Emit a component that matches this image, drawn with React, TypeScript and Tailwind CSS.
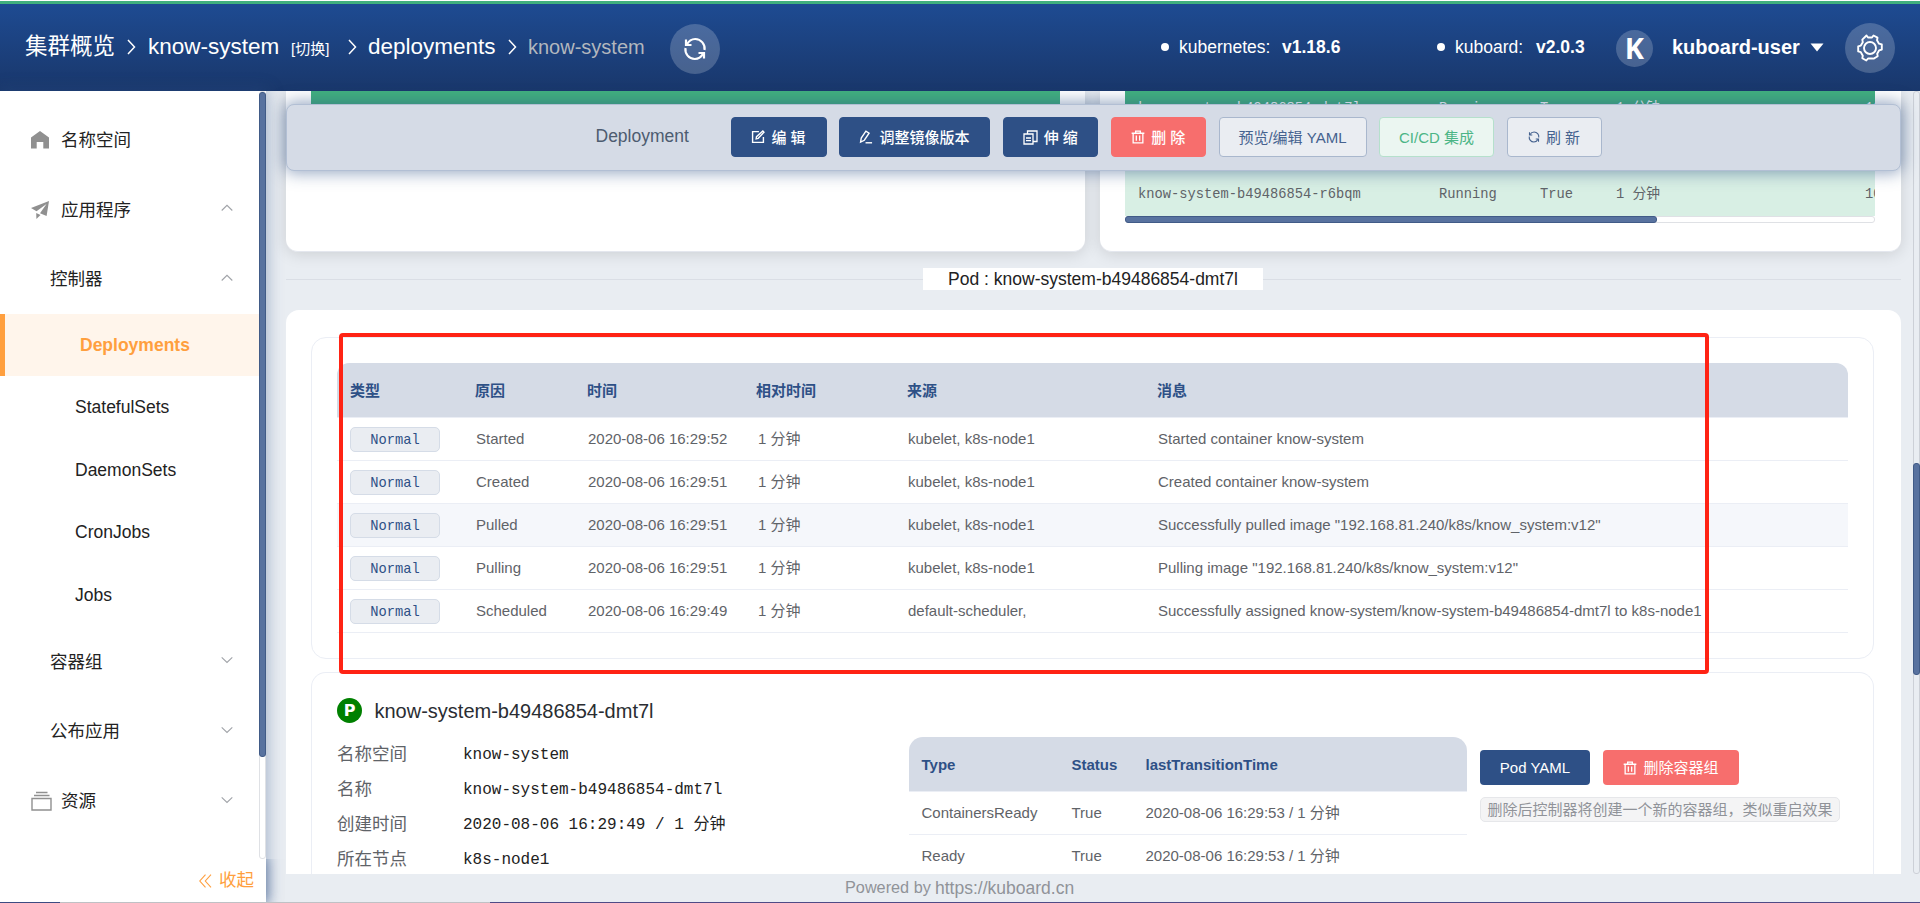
import React, { ReactNode } from "react";
import clsx from "clsx";

interface IconProps {
  className?: string;
}

interface IEvent {
  reason: string;
  time: string;
  source: string;
  message: string;
}

const events: IEvent[] = [
  {
    reason: "Started",
    time: "2020-08-06 16:29:52",
    source: "kubelet, k8s-node1",
    message: "Started container know-system",
  },
  {
    reason: "Created",
    time: "2020-08-06 16:29:51",
    source: "kubelet, k8s-node1",
    message: "Created container know-system",
  },
  {
    reason: "Pulled",
    time: "2020-08-06 16:29:51",
    source: "kubelet, k8s-node1",
    message: 'Successfully pulled image "192.168.81.240/k8s/know_system:v12"',
  },
  {
    reason: "Pulling",
    time: "2020-08-06 16:29:51",
    source: "kubelet, k8s-node1",
    message: 'Pulling image "192.168.81.240/k8s/know_system:v12"',
  },
  {
    reason: "Scheduled",
    time: "2020-08-06 16:29:49",
    source: "default-scheduler,",
    message:
      "Successfully assigned know-system/know-system-b49486854-dmt7l to k8s-node1",
  },
];

const details = [
  ["名称空间", "know-system"],
  ["名称", "know-system-b49486854-dmt7l"],
  ["创建时间", "2020-08-06 16:29:49 / 1 分钟"],
  ["所在节点", "k8s-node1"],
];

const conditions = ["ContainersReady", "Ready"];

const MONO = "font-['Liberation_Mono','Noto_Sans_CJK_SC',monospace]";

/* ---------- icons ---------- */

const HomeIcon = () => (
  <svg width="18" height="18" viewBox="0 0 18 18" fill="#909090">
    <path d="M0 6.500 9 0l9 6.500V17.500h-5.700V11H5.700v6.500H0Z" />
  </svg>
);

const PlaneIcon = () => (
  <svg width="18" height="18" viewBox="0 0 18 18" fill="#909090">
    <path d="M0 7 18 0 15.600 15 9 12.200 15.500 3 5.500 10.300Z" />
    <path d="M5.200 12 9.500 14 5.400 18Z" />
  </svg>
);

const BoxIcon = () => (
  <svg width="21" height="20" viewBox="0 0 21 20" fill="none" stroke="#909090">
    <path d="M5 1.500h11.500M3 4.500h15.500" strokeWidth="1.300" />
    <path d="M1 7.500h19v11.500H1Z" strokeWidth="1.400" />
  </svg>
);

const Chevron = ({ up }: { up?: boolean }) => (
  <svg
    width="12"
    height="8"
    viewBox="0 0 12 8"
    fill="none"
    stroke="#a0a3a8"
    strokeWidth="1.100"
  >
    <path d={up ? "M.7 6.500 6 1.300l5.300 5.200" : "M.7 1.300 6 6.500l5.300-5.200"} />
  </svg>
);

const Separator = ({ className }: IconProps) => (
  <svg
    width="9"
    height="16"
    viewBox="0 0 9 16"
    fill="none"
    stroke="#fff"
    strokeWidth="1.500"
    className={className}
  >
    <path d="M1 1l6.500 7L1 15" />
  </svg>
);

const RefreshIcon = ({ className }: IconProps) => (
  <svg
    viewBox="0 0 24 24"
    fill="none"
    stroke="currentColor"
    strokeWidth="2.200"
    className={className}
  >
    <path d="M3 2.500V8h5.500" />
    <path d="M3.800 7.500C6 3.500 9 2 12.200 2a9.500 9.500 0 0 1 9.300 11" />
    <path d="M21 21.500V16h-5.500" />
    <path d="M20.200 16.500C18 20.500 15 22 11.800 22a9.500 9.500 0 0 1-9.300-11" />
  </svg>
);

const GearIcon = () => (
  <svg
    width="28"
    height="28"
    viewBox="0 0 28 28"
    fill="none"
    stroke="#fff"
    strokeWidth="1.900"
    strokeLinejoin="round"
  >
    <path d="M10.500 1.500 12 3.500h4l1.500-2 4 2.200-.5 2.600 2 3.400 2.800.8v5l-2.600.8-2 3.500.5 2.500-4 2.300L16 24.500h-4l-1.700 2-4-2.300.5-2.500-2-3.500-2.600-.8v-5l2.600-.8 2-3.400-.5-2.600Z" />
    <circle cx="14" cy="14" r="6" />
  </svg>
);

const EditIcon = () => (
  <svg width="14" height="14" viewBox="0 0 15 15" fill="none" stroke="currentColor" strokeWidth="1.500">
    <path d="M8.500 1.700H1.700v11.600h11.600V7.500" />
    <path d="M5.500 9.500l.4-2.400 6.800-6 1.200 1.300-6.200 6.500Z" />
  </svg>
);

const PenIcon = () => (
  <svg width="14" height="14" viewBox="0 0 15 15" fill="none" stroke="currentColor" strokeWidth="1.500">
    <path d="M1.700 13l.7-4.300 5-7.500L10.800 3.500 5.700 11Z" />
    <path d="M7 13.700h7" />
  </svg>
);

const CopyIcon = () => (
  <svg width="15" height="15" viewBox="0 0 15 15" fill="none" stroke="currentColor" strokeWidth="1.300">
    <path d="M1 4h9v10H1Z" />
    <path d="M4.500 4V1H14v10.500h-4M3 8h5M3 10.700h5" />
  </svg>
);

const TrashIcon = () => (
  <svg width="14" height="14" viewBox="0 0 15 15" fill="none" stroke="currentColor" strokeWidth="1.400">
    <path d="M.7 3.500h13.600M5 3.300V1.200h5v2.100M2.300 3.500v10.300h10.400V3.500M5.700 6v5.500M9.300 6v5.500" />
  </svg>
);

/* ---------- header ---------- */

const Header = () => (
  <header className="h-[91px] flex-none bg-white pt-px">
    <div className="h-[90px] border-t-[3px] border-[#41b07e] bg-gradient-to-b from-[#1e4b92] to-[#19376b] flex items-center text-white whitespace-nowrap pb-px">
      <span className="ml-[25px] w-[91px] text-[22.5px]">集群概览</span>
      <Separator className="ml-[11px]" />
      <span className="ml-[12px] w-[131px] text-[22.5px]">know-system</span>
      <span className="ml-[12px] mt-1 w-[42px] text-[15px]">[切换]</span>
      <Separator className="ml-[15px]" />
      <span className="ml-[11px] w-[128px] text-[22.5px]">deployments</span>
      <Separator className="ml-[12px]" />
      <span className="ml-[11px] w-[117px] text-[20px] text-[#b2b7be]">
        know-system
      </span>
      <span className="ml-[25px] mt-[3px] size-[50px] rounded-full bg-white/20 flex items-center justify-center">
        <RefreshIcon className="size-[24px]" />
      </span>

      <span className="ml-auto size-2 rounded-full bg-white" />
      <span className="ml-[10px] w-[103px] text-[17.5px]">kubernetes:</span>
      <span className="w-[155px] text-[17.5px] font-bold">v1.18.6</span>
      <span className="size-2 rounded-full bg-white" />
      <span className="ml-[10px] w-[81px] text-[17.5px]">kuboard:</span>
      <span className="w-[80px] text-[17.5px] font-bold">v2.0.3</span>
      <span className="mt-[3px] size-[37px] rounded-full bg-white/20 flex items-center justify-center pb-[2px] font-['Noto_Sans',sans-serif] text-[29px] leading-none font-bold">
        K
      </span>
      <span className="ml-[19px] w-[129px] text-[20px] font-bold">
        kuboard-user
      </span>
      <svg width="14" height="9" viewBox="0 0 14 9" fill="#fff" className="ml-[9px]">
        <path d="M.5.5h13L7 8.500Z" />
      </svg>
      <span className="ml-[21px] mr-[25px] mt-[2px] size-[50px] rounded-full bg-white/20 flex items-center justify-center">
        <GearIcon />
      </span>
    </div>
  </header>
);

/* ---------- sidebar ---------- */

interface MenuItemProps {
  label: string;
  icon?: ReactNode;
  open?: boolean;
  collapsible?: boolean;
  className?: string;
}

const MenuItem = ({ label, icon, open, collapsible, className }: MenuItemProps) => (
  <div className={clsx("h-[69.7px] flex items-center pr-[26px]", className)}>
    {icon && <span className="w-[30px] flex-none">{icon}</span>}
    <span className="pt-px">{label}</span>
    {collapsible && (
      <span className="ml-auto pb-[3px]">
        <Chevron up={open} />
      </span>
    )}
  </div>
);

const Sidebar = () => (
  <aside className="relative z-20 w-[266px] flex-none flex flex-col bg-white text-[17.5px] text-[#222] shadow-[0_0_14px_2px_rgba(46,80,134,0.35)]">
    <div className="flex h-[768px]">
      <nav className="flex-1 pt-[14px]">
        <MenuItem label="名称空间" icon={<HomeIcon />} className="pl-[31px]" />
        <MenuItem label="应用程序" icon={<PlaneIcon />} collapsible open className="pl-[31px]" />
        <MenuItem label="控制器" collapsible open className="pl-[50px]" />
        <div className="h-[62px] border-l-[5px] border-[#ff9f3e] bg-[#fff5eb] pl-[75px] flex items-center font-bold text-[#ff9f3e]">
          Deployments
        </div>
        {["StatefulSets", "DaemonSets", "CronJobs", "Jobs"].map((name) => (
          <div key={name} className="h-[62.7px] pl-[75px] flex items-center">
            {name}
          </div>
        ))}
        <MenuItem label="容器组" collapsible className="pl-[50px]" />
        <MenuItem label="公布应用" collapsible className="pl-[50px]" />
        <MenuItem label="资源" icon={<BoxIcon />} collapsible className="pl-[31px]" />
      </nav>
      <div className="w-[7px] flex-none rounded-[3px] border border-[#dfe1e5]">
        <div className="-mx-px h-[665px] rounded-[3px] border border-[#415b87] bg-[#58729f]" />
      </div>
    </div>
    <div className="flex-1 flex items-center justify-end gap-[7px] pr-[12px] text-[#ff9f3e] shadow-[0_0_12px_1px_rgba(46,80,134,0.6)] [clip-path:inset(0_-20px_0_0)]">
      <svg width="13" height="14" viewBox="0 0 13 14" fill="none" stroke="currentColor" strokeWidth="1.100">
        <path d="M6.500.7.8 7l5.700 6.300M12 .7 6.300 7l5.700 6.300" />
      </svg>
      收起
    </div>
  </aside>
);

/* ---------- floating toolbar ---------- */

interface ToolButtonProps {
  children: ReactNode;
  icon?: ReactNode;
  className: string;
}

const ToolButton = ({ children, icon, className }: ToolButtonProps) => (
  <button
    className={clsx(
      "h-[40px] flex items-center justify-center gap-[6px] rounded-[4px] border text-[15px] whitespace-nowrap",
      className
    )}
  >
    {icon}
    {children}
  </button>
);

const PRIMARY = "bg-[#2e5086] border-[#2e5086] text-white font-medium";
const PLAIN = "bg-[#eaedf2] border-[#a9b7cd] text-[#45628f]";
const DANGER = "bg-[#f76e6d] border-[#f76e6d] text-white font-medium";

const Toolbar = () => (
  <div className="absolute left-[19.500px] top-[12.500px] z-10 w-[1615px] h-[67.500px] flex items-center rounded-[8px] border border-[#b2bfd4] bg-[#d5dbe6] shadow-[0_0_16px_2px_rgba(46,80,134,0.5)]">
    <span className="ml-[309px] w-[135px] pb-[2px] text-[17.5px] text-[#4d5c70]">
      Deployment
    </span>
    <div className="flex gap-[12.500px]">
      <ToolButton icon={<EditIcon />} className={clsx(PRIMARY, "w-[96px]")}>
        编 辑
      </ToolButton>
      <ToolButton icon={<PenIcon />} className={clsx(PRIMARY, "w-[151px]")}>
        调整镜像版本
      </ToolButton>
      <ToolButton icon={<CopyIcon />} className={clsx(PRIMARY, "w-[95.500px]")}>
        伸 缩
      </ToolButton>
      <ToolButton icon={<TrashIcon />} className={clsx(DANGER, "w-[95.500px]")}>
        删 除
      </ToolButton>
      <ToolButton className={clsx(PLAIN, "w-[148px]")}>预览/编辑 YAML</ToolButton>
      <ToolButton className="w-[115px] bg-[#ebf6f1] border-[#b5e0cc] text-[#4bb586]">
        CI/CD 集成
      </ToolButton>
      <ToolButton
        icon={<RefreshIcon className="size-[12px]" />}
        className={clsx(PLAIN, "w-[95px]")}
      >
        刷 新
      </ToolButton>
    </div>
  </div>
);

/* ---------- content ---------- */

const ReplicaRow = ({ name, className }: { name: string; className: string }) => (
  <div className={clsx("flex items-center flex-none whitespace-pre pl-[13px]", className)}>
    <span className="w-[301px] flex-none">{name}</span>
    <span className="w-[101px] flex-none">Running</span>
    <span className="w-[76px] flex-none">True</span>
    <span className="w-[249px] flex-none">1 分钟</span>
    <span>10</span>
  </div>
);

const OverviewCards = () => (
  <div className="flex gap-[14.500px] h-[161px]">
    <div className="w-[799px] rounded-b-[12px] border-b border-[#e4e7ee] bg-white px-[25px] shadow-[0_2px_16px_rgba(0,0,0,0.13)]">
      <div className="h-[26px] bg-[#41b07e]" />
    </div>
    <div className="w-[801px] rounded-b-[12px] border-b border-[#e4e7ee] bg-white pl-[25.500px] pr-[26px] shadow-[0_2px_16px_rgba(0,0,0,0.13)]">
      <div className={clsx("flex flex-col overflow-hidden text-[13.750px] text-[#5f6368]", MONO)}>
        <ReplicaRow
          name="know-system-b49486854-dmt7l"
          className="h-[35px] bg-[#41b07e] text-white"
        />
        <div className="h-[44px] bg-[#d8efe4]" />
        <ReplicaRow
          name="know-system-b49486854-r6bqm"
          className="h-[46px] pt-[4px] bg-[#d8efe4]"
        />
      </div>
      <div className="h-[7px] rounded-[3px] border border-[#dfe1e5]">
        <div className="-mx-px -mt-px h-[7px] w-[532px] rounded-[3px] border border-[#415b87] bg-[#58729f]" />
      </div>
    </div>
  </div>
);

const EVENT_GRID = "grid grid-cols-[125px_112px_169px_151px_250px_1fr] items-center pl-[13px]";

const EventTable = () => (
  <div className="h-[322px] rounded-[15px] border border-[#ebeef5] px-[25px] pt-[25px] text-[15px] text-[#5f6368]">
    <div
      className={clsx(
        EVENT_GRID,
        "h-[55px] pt-px rounded-t-[12px] border-b border-[#ebeef5] bg-[#d5dbe6] font-bold text-[#2e5086]"
      )}
    >
      <span>类型</span>
      <span>原因</span>
      <span>时间</span>
      <span>相对时间</span>
      <span>来源</span>
      <span>消息</span>
    </div>
    {events.map((event) => (
      <div
        key={event.reason}
        className={clsx(
          EVENT_GRID,
          "h-[43px] border-b border-[#ebeef5] whitespace-nowrap",
          event.reason === "Pulled" && "bg-[#f5f7fb]"
        )}
      >
        <span
          className={clsx(
            "w-[90px] h-[25px] pt-[3px] flex items-center justify-center rounded-[5px] border border-[#d5dce7] bg-[#eaedf2] text-[13.750px] text-[#2e5086]",
            MONO
          )}
        >
          Normal
        </span>
        <span className="pl-px">{event.reason}</span>
        <span className="pl-px">{event.time}</span>
        <span className="pl-[2px]">1 分钟</span>
        <span className="pl-px">{event.source}</span>
        <span className="pl-px">{event.message}</span>
      </div>
    ))}
  </div>
);

const CONDITION_GRID = "grid grid-cols-[150px_74px_1fr] items-center pl-[12.500px]";

const PodDetail = () => (
  <div className="h-[260px] mt-[13px] rounded-t-[15px] border border-b-0 border-[#ebeef5] px-[25px] pt-[25px] flex">
    <div className="w-[572px] flex-none text-[17.5px]">
      <div className="flex h-[25px] items-center gap-[12.500px]">
        <span className="size-[25px] rounded-full bg-[#008000] flex items-center justify-center pt-px font-['DejaVu_Sans',sans-serif] text-[16px] leading-none font-bold text-white">
          P
        </span>
        <span className="text-[20px] text-[#2a2d32]">
          know-system-b49486854-dmt7l
        </span>
      </div>
      <div className="pt-[14px]">
        {details.map(([label, value]) => (
          <div key={label} className="flex h-[35px] items-center">
            <span className="w-[126px] text-[#5f6368]">{label}</span>
            <span className={clsx("pt-[2px] text-[16px] text-[#222]", MONO)}>{value}</span>
          </div>
        ))}
      </div>
    </div>

    <div className="w-[558px] flex-none pt-[39px] text-[15px] text-[#5f6368]">
      <div
        className={clsx(
          CONDITION_GRID,
          "h-[55px] pt-[2px] rounded-t-[14px] border-b border-[#ebeef5] bg-[#d5dbe6] font-bold text-[#2e5086]"
        )}
      >
        <span>Type</span>
        <span>Status</span>
        <span>lastTransitionTime</span>
      </div>
      {conditions.map((type) => (
        <div key={type} className={clsx(CONDITION_GRID, "h-[43px] border-b border-[#ebeef5]")}>
          <span>{type}</span>
          <span>True</span>
          <span>2020-08-06 16:29:53 / 1 分钟</span>
        </div>
      ))}
    </div>

    <div className="pl-[13px] pt-[52px] text-[15px] whitespace-nowrap">
      <div className="flex gap-[13px] text-white">
        <button className="w-[110px] h-[35px] rounded-[4px] bg-[#2e5086]">
          Pod YAML
        </button>
        <button className="w-[136px] h-[35px] rounded-[4px] bg-[#f76e6d] flex items-center justify-center gap-[6px]">
          <TrashIcon />
          删除容器组
        </button>
      </div>
      <div className="mt-[12px] w-[360px] h-[25px] flex items-center justify-center rounded-[5px] border border-[#e6e7ea] bg-[#f4f4f5] text-[#909399]">
        删除后控制器将创建一个新的容器组，类似重启效果
      </div>
    </div>
  </div>
);

const App: React.FC = () => {
  return (
    <div className="w-[1920px] h-[903px] flex flex-col overflow-hidden bg-[#e9edf2] font-['Liberation_Sans','Noto_Sans_CJK_SC',sans-serif] leading-[1.3]">
      <Header />
      <div className="flex flex-1 min-h-0">
        <Sidebar />
        <main className="relative flex-1 flex flex-col">
          <div className="flex h-[783px] flex-none overflow-hidden">
            <div className="w-[1634.500px] flex-none pl-[20px]">
              <OverviewCards />
              {/* pod title on the divider */}
              <div className="flex h-[58px] items-center pb-[4px]">
                <div className="h-px w-[637px] bg-[#dadee5]" />
                <div className="h-[22px] w-[340px] flex items-center justify-center bg-white text-[17.5px] text-[#222]">
                  Pod : know-system-b49486854-dmt7l
                </div>
                <div className="h-px flex-1 bg-[#dadee5]" />
              </div>
              <div className="rounded-t-[13px] bg-white pl-[25px] pt-[27px] pr-[26.500px]">
                <EventTable />
                <PodDetail />
              </div>
            </div>
            <div className="ml-auto w-[7px] flex-none rounded-[3px] border border-[#ccd0d7] pt-[371px]">
              <div className="-mx-px h-[212px] rounded-[3px] border border-[#415b87] bg-[#58729f]" />
            </div>
          </div>
          <footer className="flex-1 flex items-center pl-[579px] text-[#909399] whitespace-nowrap">
            <span className="w-[90px] pb-px text-[16.250px]">Powered by</span>
            <span className="text-[17.5px]">https://kuboard.cn</span>
          </footer>
          <Toolbar />
          {/* highlight around the events */}
          <div className="absolute left-[73px] top-[242px] z-10 w-[1370px] h-[341px] rounded-[4px] border-[4px] border-[#ff2314]" />
        </main>
      </div>
      <div className="relative z-30 flex h-px flex-none">
        <div className="w-[60px] bg-[#3c4b82]" />
        <div className="w-[430px] bg-[#bfc1c5]" />
        <div className="flex-1 bg-[#4f4b86]" />
      </div>
    </div>
  );
};

export default App;
